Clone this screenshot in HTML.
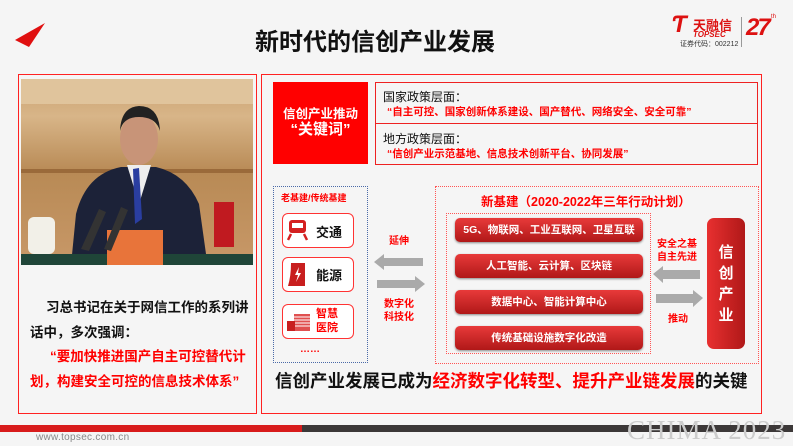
<!DOCTYPE html>
<html><head><meta charset="utf-8"><style>
*{margin:0;padding:0;box-sizing:border-box}
body{width:793px;height:446px;overflow:hidden;background:#f5f5f5;font-family:"Liberation Sans","Noto Sans CJK SC",sans-serif;position:relative}
.a{position:absolute}
.b{font-weight:bold}
.red{color:#f00}
.btn{position:absolute;left:455px;width:188px;height:24px;border-radius:5px;background:linear-gradient(#e83a3a,#b01818);color:#fff;font-size:10.5px;font-weight:bold;text-align:center;line-height:24px;box-shadow:0 1px 2px #888;white-space:nowrap}
.item{position:absolute;left:282px;width:72px;height:35px;border:1.5px solid #f33;border-radius:6px;background:#fff}
</style></head><body>
<svg class="a" style="left:14px;top:22px" width="32" height="26"><polygon points="31,1 1,18 15,25" fill="#e01010"/></svg>
<div class="a b" style="left:255px;top:22px;font-size:24px;color:#111">新时代的信创产业发展</div>
<div class="a" style="left:672px;top:14px;width:22px;height:22px;font-size:24px;color:#d11;font-weight:bold;font-style:italic;line-height:22px">Ƭ</div>
<div class="a b" style="left:693px;top:15px;font-size:13px;color:#d11">天融信</div>
<div class="a b" style="left:693px;top:30px;font-size:8px;color:#d11;font-style:italic">TOPSEC</div>
<div class="a" style="left:680px;top:39px;font-size:7px;color:#333">证券代码：002212</div>
<div class="a" style="left:741px;top:17px;width:1px;height:30px;background:#999"></div>
<div class="a b" style="left:746px;top:14px;font-size:24px;color:#d11;font-style:italic;letter-spacing:-2px">27</div>
<div class="a" style="left:771px;top:14px;font-size:6px;color:#d11">th</div>

<div class="a" style="left:18px;top:74px;width:239px;height:340px;border:1.5px solid #f22"></div>
<svg class="a" style="left:21px;top:79px" width="232" height="186">
<defs><linearGradient id="bg" x1="0" y1="0" x2="0" y2="1"><stop offset="0" stop-color="#c9a070"/><stop offset="0.2" stop-color="#d8b588"/><stop offset="0.5" stop-color="#b88a55"/><stop offset="1" stop-color="#c89868"/></linearGradient></defs>
<rect width="232" height="186" fill="url(#bg)"/>
<rect y="0" width="232" height="25" fill="#e0c49c"/>
<rect y="90" width="232" height="4" fill="#9a6a3a"/>
<rect x="193" y="123" width="20" height="45" fill="#c01a20"/>
<path d="M50 186 L55 135 Q65 95 100 88 L135 88 Q165 95 178 125 L185 175 L185 186Z" fill="#1c2238"/>
<path d="M106 86 L118 125 L130 86Z" fill="#eee"/>
<path d="M112 90 L118 89 L121 140 L114 145Z" fill="#2a3ea0"/>
<ellipse cx="118" cy="60" rx="19" ry="26" fill="#c89478"/>
<path d="M99 52 Q100 28 118 27 Q138 27 139 52 Q135 38 118 38 Q102 38 99 52Z" fill="#222"/>
<rect x="7" y="138" width="27" height="37" rx="6" fill="#f2f0e8"/>
<rect x="0" y="175" width="232" height="11" fill="#1f4538"/>
<rect x="86" y="151" width="56" height="35" fill="#e8743a"/>
<path d="M60 170 L78 130 L85 133 L68 172Z M83 170 L100 128 L107 131 L90 172Z" fill="#333"/>
</svg>
<div class="a b" style="left:30px;top:296px;width:222px;font-size:13.5px;line-height:24.5px;color:#111;text-indent:16px">习总书记在关于网信工作的系列讲话中，多次强调：</div>
<div class="a b red" style="left:30px;top:345px;width:222px;font-size:13.5px;line-height:24.5px;text-indent:20px">“要加快推进国产自主可控替代计划，构建安全可控的信息技术体系”</div>

<div class="a" style="left:261px;top:74px;width:501px;height:340px;border:1.5px solid #f22"></div>
<div class="a b" style="left:273px;top:82px;width:95px;height:82px;background:#f00;color:#fff;text-align:center;font-size:12.5px;padding-top:24px;line-height:16px">信创产业推动<br><span style="font-size:15px">“关键词”</span></div>
<div class="a" style="left:375px;top:82px;width:383px;height:42px;border:1px solid #e22"></div>
<div class="a" style="left:375px;top:123px;width:383px;height:42px;border:1px solid #e22"></div>
<div class="a" style="left:383px;top:88px;font-size:12px;color:#111">国家政策层面：</div>
<div class="a b red" style="left:387px;top:104px;font-size:10.5px">“自主可控、国家创新体系建设、国产替代、网络安全、安全可靠”</div>
<div class="a" style="left:383px;top:130px;font-size:12px;color:#111">地方政策层面：</div>
<div class="a b red" style="left:387px;top:146px;font-size:10.5px">“信创产业示范基地、信息技术创新平台、协同发展”</div>

<div class="a" style="left:273px;top:186px;width:95px;height:177px;border:1px dotted #4a6aa8"></div>
<div class="a b red" style="left:281px;top:191px;font-size:9px">老基建/传统基建</div>
<div class="item" style="top:213px"></div>
<div class="item" style="top:257px"></div>
<div class="item" style="top:304px"></div>
<svg class="a" style="left:287px;top:219px" width="22" height="22"><rect x="2" y="1" width="17" height="13" rx="3" fill="#d42020"/><rect x="5" y="4" width="11" height="5" fill="#fff"/><path d="M4 15 L1 21 M17 15 L20 21" stroke="#d42020" stroke-width="2.5"/></svg>
<div class="a b" style="left:316px;top:222px;font-size:13px;color:#111">交通</div>
<svg class="a" style="left:287px;top:262px" width="22" height="26"><path d="M4 1 L18 1 L18 24 L1 24 Q4 14 4 1Z" fill="#c81e1e"/><path d="M12 5 L8 13 L11 13 L9 20 L14 11 L11 11Z" fill="#fff"/></svg>
<div class="a b" style="left:316px;top:265px;font-size:13px;color:#111">能源</div>
<svg class="a" style="left:286px;top:312px" width="26" height="20"><rect x="8" y="2" width="16" height="17" fill="#e05050"/><path d="M8 5h16M8 8h16M8 11h16M8 14h16" stroke="#fff" stroke-width="1"/><rect x="1" y="9" width="8" height="10" fill="#c82020"/></svg>
<div class="a b red" style="left:316px;top:307px;font-size:11px;line-height:14px">智慧<br>医院</div>
<div class="a b red" style="left:300px;top:344px;font-size:10px">……</div>

<div class="a b red" style="left:389px;top:232px;font-size:10px">延伸</div>
<svg class="a" style="left:374px;top:254px" width="52" height="40"><polygon points="0,8 10,0 10,4 49,4 49,12 10,12 10,16" fill="#aaa"/><polygon points="51,30 41,22 41,26 3,26 3,34 41,34 41,38" fill="#aaa"/></svg>
<div class="a b red" style="left:384px;top:298px;font-size:10px;line-height:13px">数字化<br>科技化</div>

<div class="a" style="left:435px;top:186px;width:324px;height:178px;border:1px dotted #f55"></div>
<div class="a b red" style="left:481px;top:191px;font-size:12.5px">新基建（2020-2022年三年行动计划）</div>
<div class="a" style="left:446px;top:213px;width:205px;height:141px;border:1px dotted #f55"></div>
<div class="btn" style="top:218px">5G、物联网、工业互联网、卫星互联</div>
<div class="btn" style="top:254px">人工智能、云计算、区块链</div>
<div class="btn" style="top:290px">数据中心、智能计算中心</div>
<div class="btn" style="top:326px">传统基础设施数字化改造</div>
<div class="a b red" style="left:657px;top:238px;font-size:10px;line-height:13px">安全之基<br>自主先进</div>
<svg class="a" style="left:653px;top:266px" width="52" height="42"><polygon points="0,8 10,0 10,4 47,4 47,13 10,13 10,17" fill="#aaa"/><polygon points="50,32 40,24 40,28 3,28 3,37 40,37 40,41" fill="#aaa"/></svg>
<div class="a b red" style="left:668px;top:310px;font-size:10px">推动</div>
<div class="a b" style="left:707px;top:218px;width:38px;height:131px;border-radius:7px;background:linear-gradient(90deg,#e83030,#b01818);color:#fff;font-size:15px;line-height:21px;text-align:center;padding-top:24px">信<br>创<br>产<br>业</div>

<div class="a b" style="left:275px;top:368px;font-size:17.5px;color:#111;white-space:nowrap">信创产业发展已成为<span class="red">经济数字化转型、提升产业链发展</span>的关键</div>

<div class="a" style="left:0;top:425px;width:793px;height:7px;background:#3c3838"></div>
<div class="a" style="left:0;top:425px;width:302px;height:7px;background:#d81c1c"></div>
<div class="a" style="left:36px;top:432px;font-size:10px;color:#888;letter-spacing:0.3px">www.topsec.com.cn</div>
<div class="a" style="left:627px;top:415px;font-family:'Liberation Serif',serif;font-size:27px;color:#ccc;letter-spacing:1px">CHIMA 2023</div>
</body></html>
